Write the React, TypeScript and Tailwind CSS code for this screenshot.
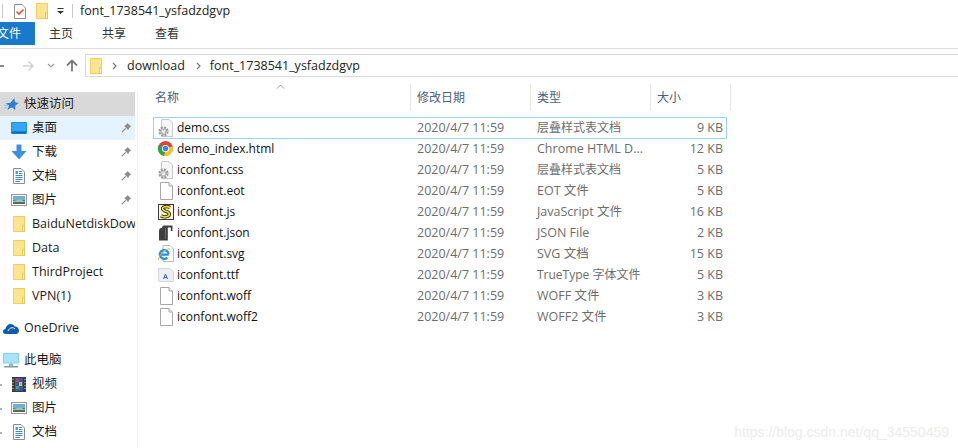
import React from "react";

const FolderIcon = ({ className = "" }: { className?: string }) => (
  <svg width="12" height="16" viewBox="0 0 12 16" className={className}>
    <rect x="0.5" y="0.5" width="11" height="15" fill="#fde58f" stroke="#f2cd62" />
    <rect x="9.5" y="10" width="2" height="5.5" fill="#fff3c4" stroke="#e8bf4f" strokeWidth="0.8" />
  </svg>
);

const Pin = () => (
  <svg width="11" height="11" viewBox="0 0 12 12">
    <path d="M7 1 L11 5 L9.6 5.6 L7.8 8.6 L3.6 4.4 L6.4 2.4Z" fill="#8a8a8a" />
    <path d="M5 7 L1 11" stroke="#8a8a8a" strokeWidth="1.4" />
  </svg>
);

const Star = () => (
  <svg width="15" height="15" viewBox="0 0 16 16">
    <path d="M11 1 L11.6 5.4 L15.6 6.6 L12 9 L12 13.8 L8.4 11 L3.6 13.6 L5.4 9 L1.6 6.8 L7 6Z" fill="#2a7fd0" />
    <path d="M0.5 9 H4 M0 11.5 H3" stroke="#8cc6f0" strokeWidth="1" />
  </svg>
);

const Desktop = () => (
  <svg width="16" height="12" viewBox="0 0 16 12">
    <rect x="0" y="0" width="16" height="12" rx="1" fill="#1c8fe4" />
    <rect x="1" y="1" width="14" height="8.5" fill="#36a4ee" />
    <rect x="1" y="9.5" width="14" height="2" fill="#0f6db8" />
  </svg>
);

const Download = () => (
  <svg width="16" height="16" viewBox="0 0 16 16">
    <path d="M5.5 0.5 H10.5 V7 H15.5 L8 15.5 L0.5 7 H5.5Z" fill="#3c8fdd" />
  </svg>
);

const Doc = () => (
  <svg width="12" height="16" viewBox="0 0 12 16">
    <path d="M0.5 0.5 H8 L11.5 4 V15.5 H0.5Z" fill="#fff" stroke="#8d8d8d" />
    <path d="M6 3.5H9M6 5.5H9.5M2.5 7.5H9.5M2.5 9.5H9.5M2.5 11.5H9.5M2.5 13.5H7" stroke="#3a87c8" strokeWidth="1" />
    <rect x="2.5" y="3" width="2.5" height="3" fill="#5aa0d8" />
  </svg>
);

const Pic = () => (
  <svg width="16" height="12" viewBox="0 0 16 12">
    <rect x="0.5" y="0.5" width="15" height="11" fill="#fff" stroke="#9a9a9a" />
    <rect x="2" y="2" width="12" height="4" fill="#6fb0d8" />
    <rect x="2" y="6" width="12" height="4" fill="#4f6f5a" />
    <path d="M2 7 L9 5.5 L14 7.5 V8 H2Z" fill="#a7c9b0" />
  </svg>
);

const Video = () => (
  <svg width="14" height="15" viewBox="0 0 14 15">
    <rect width="14" height="15" fill="#3b3b3b" />
    <rect x="3" y="1" width="8" height="13" fill="#3c5aa0" />
    <rect x="4" y="2" width="3" height="3" fill="#b04a7a" />
    <rect x="7" y="5" width="3" height="4" fill="#d8c23c" />
    <rect x="4" y="9" width="3" height="3" fill="#4aa070" />
    <path d="M1 2v1M1 5v1M1 8v1M1 11v1M13 2v1M13 5v1M13 8v1M13 11v1" stroke="#e0e0e0" strokeWidth="1" />
  </svg>
);

const Cloud = () => (
  <svg width="16" height="11" viewBox="0 0 16 11">
    <path d="M2.5 11 C0.6 11 0 9.6 0 8.5 C0 7 1 6 2.4 6 C3 3 5 1 7.6 1 C9.6 1 11 2 11.8 3.6 C14 3.4 16 5.2 16 7.6 C16 9.6 14.8 11 13 11Z" fill="#0f5cae" />
    <path d="M5 8 C7 4 10 4 12 6" stroke="#fff" strokeWidth="1" fill="none" />
  </svg>
);

const PC = () => (
  <svg width="16" height="15" viewBox="0 0 16 15">
    <rect x="0" y="0" width="16" height="10.5" fill="#7fd0f5" />
    <rect x="1" y="1" width="14" height="8.5" fill="#a9e2fb" />
    <rect x="6" y="10.5" width="4" height="2.5" fill="#9db6c4" />
    <rect x="1" y="13" width="14" height="1.5" fill="#7f9aa8" />
  </svg>
);

const Gear = () => (
  <svg width="16" height="18" viewBox="0 0 16 18">
    <path d="M3.5 0.5 H11 L14.5 4 V17.5 H3.5Z" fill="#f7f7f7" stroke="#c9c9c9" />
    <circle cx="5.5" cy="12.5" r="3.6" fill="none" stroke="#9a9a9a" strokeWidth="3" strokeDasharray="1.9 0.9" />
    <circle cx="5.5" cy="12.5" r="3.2" fill="#bdbdbd" />
    <circle cx="5.5" cy="12.5" r="1.5" fill="#f2f2f2" />
  </svg>
);

const Blank = () => (
  <svg width="16" height="18" viewBox="0 0 16 18">
    <path d="M2.5 0.5 H11 L14.5 4 V17.5 H2.5Z" fill="#fff" stroke="#a8a8a8" />
    <path d="M11 0.5 V4 H14.5" fill="#f2f2f2" stroke="#a8a8a8" />
  </svg>
);

const Chrome = () => (
  <svg width="15" height="15" viewBox="0 0 16 16">
    <circle cx="8" cy="8" r="8" fill="#d9453a" />
    <path d="M8 8 L1 4 A8 8 0 0 0 6.5 15.9 Z" fill="#2fa24c" />
    <path d="M8 8 L15.6 5.5 A8 8 0 0 1 6.5 15.9 Z" fill="#f6c62d" />
    <circle cx="8" cy="8" r="3.8" fill="#fff" />
    <circle cx="8" cy="8" r="2.9" fill="#3d83e8" />
  </svg>
);

const Js = () => (
  <svg width="16" height="16" viewBox="0 0 16 16">
    <rect x="0.5" y="0.5" width="15" height="15" fill="#fbf7dc" stroke="#3a3a3a" />
    <path d="M12 3.5 C9 1.8 4 2.6 4.6 5.2 C5.2 7.6 11.4 7.2 11.4 10 C11.4 13 6 13.6 3 11.8" fill="none" stroke="#2e2e2e" strokeWidth="3.4" />
    <path d="M12 3.5 C9 1.8 4 2.6 4.6 5.2 C5.2 7.6 11.4 7.2 11.4 10 C11.4 13 6 13.6 3 11.8" fill="none" stroke="#f2de2c" strokeWidth="1.6" />
  </svg>
);

const Json = () => (
  <svg width="15" height="16" viewBox="0 0 15 16">
    <path d="M6 0.5 H14.5 V6 H12.8 V2.5 H9.8 V15.5 H1 V6 C1 4 2.5 2.8 4 2.8 C4.6 1.4 5 0.5 6 0.5Z" fill="#3f3f3f" />
    <path d="M7.4 3 V14" stroke="#7a7a7a" strokeWidth="0.8" />
  </svg>
);

const IE = () => (
  <svg width="16" height="17" viewBox="0 0 16 17">
    <path d="M5 0.5 H12 L15.5 4 V16.5 H5Z" fill="#fff" stroke="#bbb" />
    <path d="M10.8 9.6 H2.6 M10.6 9 A4.4 4.4 0 1 0 9.4 12.6" fill="none" stroke="#2b8fdc" strokeWidth="2.3" />
    <path d="M0.5 15 C1 10 7 3 12 4" fill="none" stroke="#f0b429" strokeWidth="1" />
  </svg>
);

const Ttf = () => (
  <svg width="16" height="14" viewBox="0 0 16 14">
    <path d="M0.5 0.5 H12 L15.5 4 V13.5 H0.5Z" fill="#eceff6" stroke="#d3d6dc" />
    <path d="M5.5 11 L7.5 6 L9.5 11 M6.2 9.5H8.8" fill="none" stroke="#3a62b8" strokeWidth="1" />
  </svg>
);

const Chevron = ({ className = "" }: { className?: string }) => (
  <svg width="5" height="8" viewBox="0 0 5 8" className={className}>
    <path d="M1 1 L4 4 L1 7" fill="none" stroke="#777" strokeWidth="1.2" />
  </svg>
);

type FileRow = {
  name: string;
  icon: React.ReactNode;
  type: string;
  size: string;
  selected?: boolean;
  cjk?: boolean;
};

const files: FileRow[] = [
  { name: "demo.css", icon: <Gear />, type: "层叠样式表文档", size: "9 KB", selected: true, cjk: true },
  { name: "demo_index.html", icon: <Chrome />, type: "Chrome HTML D...", size: "12 KB" },
  { name: "iconfont.css", icon: <Gear />, type: "层叠样式表文档", size: "5 KB", cjk: true },
  { name: "iconfont.eot", icon: <Blank />, type: "EOT 文件", size: "5 KB" },
  { name: "iconfont.js", icon: <Js />, type: "JavaScript 文件", size: "16 KB" },
  { name: "iconfont.json", icon: <Json />, type: "JSON File", size: "2 KB" },
  { name: "iconfont.svg", icon: <IE />, type: "SVG 文档", size: "15 KB" },
  { name: "iconfont.ttf", icon: <Ttf />, type: "TrueType 字体文件", size: "5 KB", cjk: true },
  { name: "iconfont.woff", icon: <Blank />, type: "WOFF 文件", size: "3 KB" },
  { name: "iconfont.woff2", icon: <Blank />, type: "WOFF2 文件", size: "3 KB" },
];

const SideRow = ({
  icon,
  label,
  pin,
  active,
  expand,
}: {
  icon: React.ReactNode;
  label: string;
  pin?: boolean;
  active?: boolean;
  expand?: boolean;
}) => (
  <div className={`relative flex h-6 w-[135px] items-center overflow-hidden pl-[11px] ${active ? "bg-[#e5f3ff]" : ""}`}>
    {expand && <span className="absolute left-0 top-[12px] h-[2px] w-[2px] bg-[#b0b0b0]" />}
    <span className="flex w-4 shrink-0 items-center justify-center">{icon}</span>
    <span className="ml-[5px] whitespace-nowrap text-[12.5px] text-[#1a1a1a]">{label}</span>
    {pin && (
      <span className="absolute right-[3px] top-[6px]">
        <Pin />
      </span>
    )}
  </div>
);

const TopRow = ({ icon, label, className = "" }: { icon: React.ReactNode; label: string; className?: string }) => (
  <div className={`flex h-6 w-[135px] items-center pl-[3px] ${className}`}>
    <span className="flex w-4 shrink-0 items-center justify-center">{icon}</span>
    <span className="ml-[5px] whitespace-nowrap text-[12.5px] text-[#1a1a1a]">{label}</span>
  </div>
);

export default function App() {
  return (
    <div
      className="flex h-[448px] w-[958px] flex-col overflow-hidden bg-white text-[12px] leading-[16px] text-[#1a1a1a]"
      style={{ fontFamily: '"Open Sans", "Noto Sans CJK SC", sans-serif' }}
    >
      {/* title bar */}
      <div className="flex h-[22px] items-center">
        <span className="ml-[2px] h-[14px] w-px bg-[#c8c8c8]" />
        <svg width="12" height="15" viewBox="0 0 12 15" className="ml-[11px]">
          <path d="M0.5 0.5 H8 L11.5 4 V14.5 H0.5Z" fill="#fff" stroke="#8f8f8f" />
          <path d="M2.5 7.5 L5 10 L9.5 5.5" fill="none" stroke="#e0512e" strokeWidth="1.6" />
        </svg>
        <FolderIcon className="ml-[10px]" />
        <svg width="7" height="8" viewBox="0 0 7 8" className="ml-[9px]">
          <path d="M0.5 1.5 H6.5" stroke="#333" strokeWidth="1" />
          <path d="M0 4 H7 L3.5 7Z" fill="#333" />
        </svg>
        <span className="ml-[8px] h-[14px] w-px bg-[#c8c8c8]" />
        <span className="ml-[7px] text-[12.5px] text-[#222]">font_1738541_ysfadzdgvp</span>
      </div>

      {/* ribbon tabs */}
      <div className="flex h-[27px] items-start border-b border-[#dcdcdc]">
        <div className="flex h-[23px] w-[35px] items-center overflow-hidden bg-[#1979ca] text-white">
          <span className="-ml-[3px] whitespace-nowrap">文件</span>
        </div>
        <span className="ml-[14px] mt-[4px] text-[#333]">主页</span>
        <span className="ml-[29px] mt-[4px] text-[#333]">共享</span>
        <span className="ml-[29px] mt-[4px] text-[#333]">查看</span>
      </div>

      {/* address row */}
      <div className="mt-[5px] flex h-[23px] items-center">
        <span className="h-[2px] w-[4px] bg-[#8a8a8a]" />
        <svg width="12" height="12" viewBox="0 0 12 12" className="ml-[18px]">
          <path d="M1 6 H11 M6.5 1.5 L11 6 L6.5 10.5" fill="none" stroke="#cfcfcf" strokeWidth="1.4" />
        </svg>
        <svg width="8" height="5" viewBox="0 0 8 5" className="ml-[13px]">
          <path d="M1 1 L4 4 L7 1" fill="none" stroke="#9a9a9a" strokeWidth="1.2" />
        </svg>
        <svg width="12" height="13" viewBox="0 0 12 13" className="ml-[11px]">
          <path d="M1 6.5 L6 1.5 L11 6.5 M6 1.5 V12.5" fill="none" stroke="#7a7a7a" strokeWidth="1.8" />
        </svg>
        <div className="ml-[7px] flex h-[23px] flex-1 items-center border border-r-0 border-[#d9d9d9] pl-[4px] text-[12.5px]">
          <FolderIcon />
          <Chevron className="ml-[10px]" />
          <span className="ml-[10px] text-[#222]">download</span>
          <Chevron className="ml-[11px]" />
          <span className="ml-[9px] text-[#222]">font_1738541_ysfadzdgvp</span>
        </div>
      </div>

      {/* body */}
      <div className="mt-[15px] flex min-h-0 flex-1">
        <aside className="h-full w-[138px] shrink-0 overflow-hidden border-r border-[#f0f0f0]">
          <TopRow icon={<Star />} label="快速访问" className="bg-[#d9d9d9]" />
          <SideRow active icon={<Desktop />} label="桌面" pin />
          <SideRow icon={<Download />} label="下载" pin />
          <SideRow icon={<Doc />} label="文档" pin />
          <SideRow icon={<Pic />} label="图片" pin />
          <SideRow icon={<FolderIcon />} label="BaiduNetdiskDownload" />
          <SideRow icon={<FolderIcon />} label="Data" />
          <SideRow icon={<FolderIcon />} label="ThirdProject" />
          <SideRow icon={<FolderIcon />} label="VPN(1)" />
          <TopRow icon={<Cloud />} label="OneDrive" className="mt-2" />
          <TopRow icon={<PC />} label="此电脑" className="mt-2" />
          <SideRow expand icon={<Video />} label="视频" />
          <SideRow expand icon={<Pic />} label="图片" />
          <SideRow expand icon={<Doc />} label="文档" />
        </aside>

        <main className="relative min-w-0 flex-1">
          {/* header */}
          <div className="relative -mt-2 flex h-[27px] text-[#4c607a]">
            <svg width="9" height="5" viewBox="0 0 9 5" className="absolute left-[138px] top-0">
              <path d="M1 4.5 L4.5 1 L8 4.5" fill="none" stroke="#9a9a9a" />
            </svg>
            <div className="flex w-[273px] items-center border-r border-[#e5e5e5] pl-[17px]">名称</div>
            <div className="flex w-[120px] items-center border-r border-[#e5e5e5] pl-[6px]">修改日期</div>
            <div className="flex w-[120px] items-center border-r border-[#e5e5e5] pl-[6px]">类型</div>
            <div className="flex w-[80px] items-center border-r border-[#e5e5e5] pl-[6px]">大小</div>
          </div>

          {/* rows */}
          <div className="ml-[15px] mt-[6px] w-[574px]">
            {files.map((f) => (
              <div
                key={f.name}
                className={`flex items-center border ${f.selected ? "-mb-px h-[22px] border-[#99d1ff]" : "h-[21px] border-transparent"}`}
              >
                <span className="flex w-[23px] shrink-0 items-center justify-center">{f.icon}</span>
                <span className="w-[240px] shrink-0 truncate text-[#111]">{f.name}</span>
                <span className="w-[120px] shrink-0 text-[12.5px] text-[#6d6d6d]">2020/4/7 11:59</span>
                <span className={`w-[112px] shrink-0 whitespace-nowrap text-[#6d6d6d] ${f.cjk ? "text-[12px]" : "text-[12.5px]"}`}>{f.type}</span>
                <span className="w-[74px] shrink-0 text-right text-[12.5px] text-[#6d6d6d]">{f.size}</span>
              </div>
            ))}
          </div>

          <div
            className="absolute bottom-[8px] right-[9px] text-[14px] text-[#ececec]"
            style={{ fontFamily: '"Liberation Sans", sans-serif' }}
          >
            https://blog.csdn.net/qq_34550459
          </div>
        </main>
      </div>
    </div>
  );
}
